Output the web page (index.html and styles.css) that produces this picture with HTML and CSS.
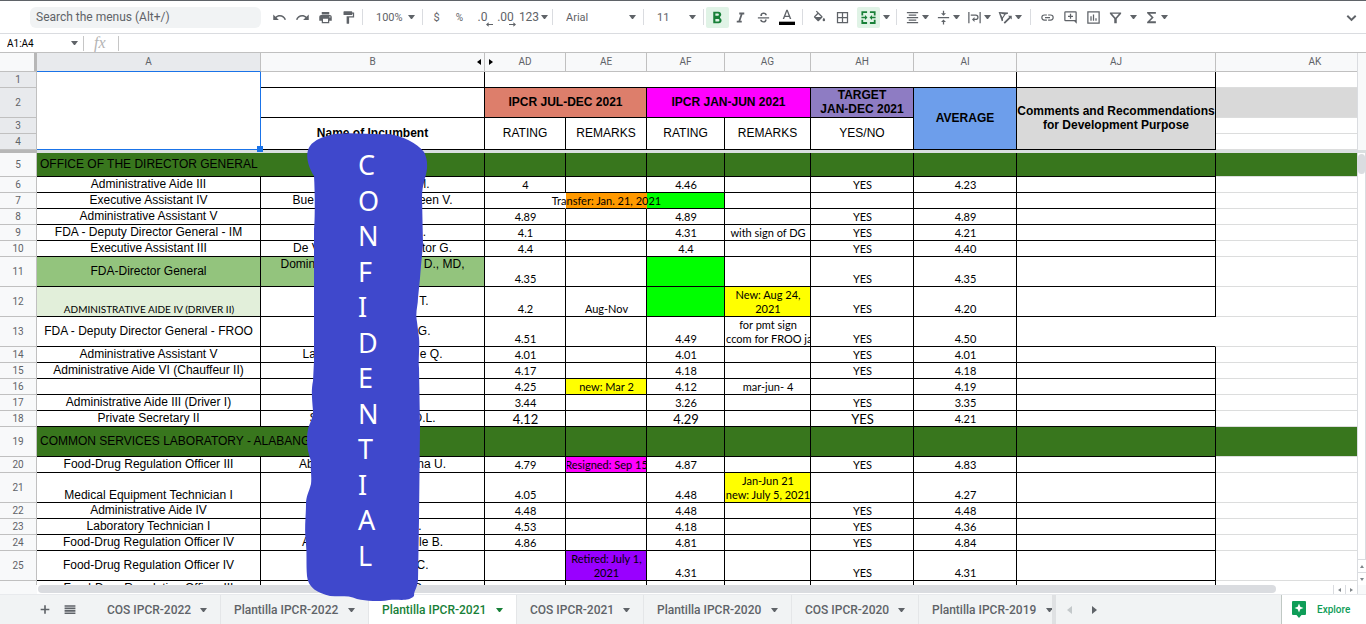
FILE: index.html
```html
<!DOCTYPE html>
<html lang="en">
<head>
<meta charset="utf-8">
<title>Plantilla IPCR-2021</title>
<link rel="stylesheet" href="styles.css">
</head>
<body>
<header class="toolbar">
  <input class="search" type="text" placeholder="Search the menus (Alt+/)" aria-label="Search the menus">
  <div class="tools">
    <button class="tool" aria-label="Undo"><svg viewBox="0 0 24 24"><path d="M12.5 8c-2.65 0-5.05.99-6.9 2.6L2 7v9h9l-3.620-3.620c1.390-1.160 3.160-1.880 5.120-1.880 3.540 0 6.550 2.310 7.600 5.500l2.370-.78C21.080 11.030 17.150 8 12.500 8z"/></svg></button>
    <button class="tool" aria-label="Redo"><svg viewBox="0 0 24 24"><path d="M18.400 10.600C16.550 8.990 14.150 8 11.500 8c-4.650 0-8.580 3.030-9.960 7.220L3.900 16c1.050-3.190 4.050-5.500 7.600-5.500 1.950 0 3.730.72 5.120 1.880L13 16h9V7l-3.600 3.600z"/></svg></button>
    <button class="tool" aria-label="Print"><svg viewBox="0 0 24 24"><path d="M19 8H5c-1.660 0-3 1.340-3 3v6h4v4h12v-4h4v-6c0-1.660-1.340-3-3-3zm-3 11H8v-5h8v5zm3-7a1 1 0 1 1 0-2 1 1 0 0 1 0 2zM18 3H6v4h12V3z"/></svg></button>
    <button class="tool" aria-label="Paint format"><svg viewBox="0 0 24 24"><path d="M18 4V3a1 1 0 0 0-1-1H5a1 1 0 0 0-1 1v4a1 1 0 0 0 1 1h12a1 1 0 0 0 1-1V6h1v4H9v11a1 1 0 0 0 1 1h2a1 1 0 0 0 1-1v-9h8V4h-3z"/></svg></button>
    <span class="sep"></span>
    <label class="pick zoom"><select aria-label="Zoom"><option>100%</option></select><i class="caret"></i></label>
    <span class="sep"></span>
    <button class="tool">$</button>
    <button class="tool small">%</button>
    <button class="tool decimal" aria-label="Decrease decimal places">.0<svg viewBox="0 0 8 5"><path d="M3 0v2h5v1H3v2L0 2.500z"/></svg></button>
    <button class="tool decimal" aria-label="Increase decimal places">.00<svg viewBox="0 0 8 5"><path d="M5 0v2H0v1h5v2l3-2.500z"/></svg></button>
    <button class="tool formats">123<i class="caret"></i></button>
    <span class="sep"></span>
    <label class="pick font"><select aria-label="Font"><option>Arial</option></select><i class="caret"></i></label>
    <span class="sep"></span>
    <label class="pick size"><select aria-label="Font size"><option>11</option></select><i class="caret"></i></label>
    <span class="sep"></span>
    <button class="tool on" aria-label="Bold"><svg viewBox="0 0 24 24"><path d="M15.600 10.790c.97-.67 1.650-1.770 1.650-2.790 0-2.260-1.750-4-4-4H6v16h8.040c2.090 0 3.710-1.700 3.710-3.790 0-1.520-.86-2.820-2.150-3.420zM9 6.500h3.500a1.500 1.500 0 0 1 0 3H9v-3zm4 11H9v-3.500h4a1.750 1.750 0 0 1 0 3.500z"/></svg></button>
    <button class="tool" aria-label="Italic"><svg viewBox="0 0 24 24"><path d="M10 4v3h2.210l-3.420 10H6v3h8v-3h-2.210l3.420-10H18V4z"/></svg></button>
    <button class="tool" aria-label="Strikethrough"><svg viewBox="0 0 24 24"><path d="M3 11.500h18v2H3zM7 9.500C6.500 6 9 4 12.200 4c3 0 5 1.600 5.200 4.200h-2.600c-.2-1.300-1.100-2-2.600-2-2 0-3.100 1.300-2.400 3.300zM16.900 15c.5 3.200-1.700 5-4.900 5s-5.300-1.700-5.400-4.500h2.600c.2 1.500 1.300 2.300 2.900 2.300 1.800 0 2.800-.9 2.300-2.800z"/></svg></button>
    <button class="tool color" aria-label="Text color"><svg viewBox="0 0 24 24"><path d="M11 1L5.500 15h2.250l1.120-3h6.250l1.120 3h2.250L13 1h-2zM9.620 10L12 3.670 14.380 10z"/><path class="ink" d="M0 19h24v5H0z"/></svg></button>
    <span class="sep wide"></span>
    <button class="tool" aria-label="Fill color"><svg viewBox="0 0 24 24"><path d="M16.560 9.940L7.620 1 6.210 2.410l2.380 2.380-5.150 5.150c-.59.59-.59 1.540 0 2.120l5.500 5.500c.29.29.68.44 1.060.44s.77-.15 1.060-.44l5.500-5.500c.59-.58.59-1.530 0-2.120zM5.210 11L10 6.210 14.790 11zM19 12.500s-2 2.170-2 3.500a2 2 0 0 0 4 0c0-1.330-2-3.500-2-3.500z"/></svg></button>
    <button class="tool" aria-label="Borders"><svg viewBox="0 0 24 24"><path d="M3 3v18h18V3H3zm8 16H5v-6h6v6zm0-8H5V5h6v6zm8 8h-6v-6h6v6zm0-8h-6V5h6v6z"/></svg></button>
    <button class="tool on merge" aria-label="Merge cells"><svg viewBox="0 0 24 24"><path d="M2 3h8v2.500H4.500V9H2zM14 3h8v6h-2.500V5.500H14zM2 15h2.500v3.500H10V21H2zM19.500 15H22v6h-8v-2.500h5.500zM2 11h5V8.500l3.500 3.500L7 15.500V13H2zM22 11h-5V8.500L13.500 12l3.500 3.500V13h5z"/></svg></button>
    <button class="tool narrow" aria-label="Merge options"><i class="caret"></i></button>
    <span class="sep wide"></span>
    <button class="tool menu" aria-label="Horizontal align"><svg viewBox="0 0 24 24"><path d="M3 3h18v2H3zM6 7h12v2H6zM3 11h18v2H3zM6 15h12v2H6zM3 19h18v2H3z"/></svg><i class="caret"></i></button>
    <button class="tool menu" aria-label="Vertical align"><svg viewBox="0 0 24 24"><path d="M8 19h3v4h2v-4h3l-4-4-4 4zM16 5h-3V1h-2v4H8l4 4 4-4zM3 11v2h18v-2z"/></svg><i class="caret"></i></button>
    <button class="tool menu" aria-label="Text wrapping"><svg viewBox="0 0 24 24"><path d="M2 3h2v18H2zM20 3h2v18h-2zM6 7h8a4.500 4.500 0 0 1 0 9h-2v3l-4-4 4-4v3h2a2.500 2.500 0 0 0 0-5H6z"/></svg><i class="caret"></i></button>
    <button class="tool menu" aria-label="Text rotation"><svg viewBox="0 0 24 24"><path fill-rule="evenodd" d="M1 3l15 1v2l-4 1-4 6v4l-2 1zM4 5.500l3 6L10 7zM9 20l9-9-2-2h6v6l-2-2-9 9z"/></svg><i class="caret"></i></button>
    <span class="sep wide"></span>
    <button class="tool" aria-label="Insert link"><svg viewBox="0 0 24 24"><path d="M3.900 12A3.100 3.100 0 0 1 7 8.900h4V7H7a5 5 0 0 0 0 10h4v-1.900H7A3.100 3.100 0 0 1 3.900 12zM8 13h8v-2H8zM17 7h-4v1.900h4a3.100 3.100 0 0 1 0 6.200h-4V17h4a5 5 0 0 0 0-10z"/></svg></button>
    <button class="tool" aria-label="Insert comment"><svg viewBox="0 0 24 24"><path fill-rule="evenodd" d="M22 4a2 2 0 0 0-2-2H4a2 2 0 0 0-2 2v12a2 2 0 0 0 2 2h14l4 4zM4 4h16v12H4zM11 6h2v3h3v2h-3v3h-2v-3H8V9h3z"/></svg></button>
    <button class="tool" aria-label="Insert chart"><svg viewBox="0 0 24 24"><path fill-rule="evenodd" d="M2 2v20h20V2zm18 18H4V4h16zM7 10h2v7H7zM11 7h2v10h-2zM15 13h2v4h-2z"/></svg></button>
    <button class="tool menu filter" aria-label="Filter"><svg viewBox="0 0 24 24"><path fill-rule="evenodd" d="M3 4h18v2l-7 8v7h-4v-7L3 6zM6.500 6l5.500 6.500L17.500 6z"/></svg><i class="caret"></i></button>
    <button class="tool menu" aria-label="Functions"><svg viewBox="0 0 24 24"><path d="M19 3H5v2l7 7-7 7v2h14v-3h-9.500l6-6-6-6H19z"/></svg><i class="caret"></i></button>
  </div>
  <button class="tool collapse" aria-label="Hide the menus"><svg viewBox="0 0 24 24"><path d="M5.500 7.500L12 14l6.500-6.500L21 10l-9 9-9-9z"/></svg></button>
</header>

<div class="formula">
  <input class="range" type="text" value="A1:A4" aria-label="Name box">
  <i class="caret"></i>
  <span class="rule"></span>
  <span class="fx">fx</span>
  <span class="rule"></span>
  <input class="entry" type="text" aria-label="Formula">
</div>

<main class="grid">
  <div class="pane">
    <table class="sheet">
      <colgroup><col class="c-num"><col class="c-wide"><col class="c-wide"><col class="c-ad"><col class="c-ad"><col class="c-af"><col class="c-ag"><col class="c-ah"><col class="c-ah"><col class="c-aj"><col class="c-aj"></colgroup>
      <thead>
        <tr class="letters"><th class="corner"></th><th class="sel">A</th><th class="b-col">B<span class="hidden-cols"><i></i><i></i></span></th><th>AD</th><th>AE</th><th>AF</th><th>AG</th><th>AH</th><th>AI</th><th>AJ</th><th>AK</th></tr>
        <tr class="h16"><th class="sel">1</th><td class="picked" rowspan="4"><span class="handle"></span></td><td></td><td colspan="6"></td><td></td><td class="free"></td></tr>
        <tr class="h30 head"><th class="sel">2</th><td></td><td class="coral" colspan="2">IPCR JUL-DEC 2021</td><td class="magenta" colspan="2">IPCR JAN-JUN 2021</td><td class="violet">TARGET<br>JAN-DEC 2021</td><td class="blue" rowspan="3">AVERAGE</td><td class="grey" rowspan="3">Comments and Recommendations for Development Purpose</td><td class="free grey"></td></tr>
        <tr class="h16"><th class="sel">3</th><td class="strong" rowspan="2">Name of Incumbent</td><td rowspan="2">RATING</td><td rowspan="2">REMARKS</td><td rowspan="2">RATING</td><td rowspan="2">REMARKS</td><td rowspan="2">YES/NO</td><td class="free"></td></tr>
        <tr class="h16"><th class="sel">4</th><td class="free"></td></tr>
        <tr class="freeze"><th></th><td colspan="10"></td></tr>
      </thead>
      <tbody>
        <tr class="h24 unit"><th>5</th><td class="title" colspan="2">OFFICE OF THE DIRECTOR GENERAL</td><td></td><td></td><td></td><td></td><td></td><td></td><td></td><td class="free"></td></tr>
        <tr class="h16"><th>6</th><td>Administrative Aide III</td><td><span class="name" style="width:114px"><span></span><span>M.</span></span></td><td class="v">4</td><td></td><td class="v">4.46</td><td></td><td class="v">YES</td><td class="v">4.23</td><td></td><td class="free"></td></tr>
        <tr class="h16"><th>7</th><td>Executive Assistant IV</td><td><span class="name" style="width:160px"><span>Bue</span><span>een V.</span></span></td><td class="open"></td><td class="v orange open"><span class="spill">Transfer: Jan. 21, 2021</span></td><td class="lime"></td><td></td><td></td><td></td><td></td><td class="free"></td></tr>
        <tr class="h16"><th>8</th><td>Administrative Assistant V</td><td></td><td class="v">4.89</td><td></td><td class="v">4.89</td><td></td><td class="v">YES</td><td class="v">4.89</td><td></td><td class="free"></td></tr>
        <tr class="h16"><th>9</th><td>FDA - Deputy Director General - IM</td><td><span class="name" style="width:107px"><span></span><span>.</span></span></td><td class="v">4.1</td><td></td><td class="v">4.31</td><td class="v">with sign of DG</td><td class="v">YES</td><td class="v">4.21</td><td></td><td class="free"></td></tr>
        <tr class="h16"><th>10</th><td>Executive Assistant III</td><td><span class="name" style="width:159px"><span>De V</span><span>tor G.</span></span></td><td class="v">4.4</td><td></td><td class="v">4.4</td><td></td><td class="v">YES</td><td class="v">4.40</td><td></td><td class="free"></td></tr>
        <tr class="h30"><th>11</th><td class="green">FDA-Director General</td><td class="green top"><span class="name" style="width:184px"><span>Domin</span><span>D., MD,</span></span></td><td class="v">4.35</td><td></td><td class="lime"></td><td></td><td class="v">YES</td><td class="v">4.35</td><td></td><td class="free"></td></tr>
        <tr class="h30"><th>12</th><td class="v pale compact">ADMINISTRATIVE AIDE IV (DRIVER II)</td><td><span class="name" style="width:112px"><span></span><span>T.</span></span></td><td class="v">4.2</td><td class="v">Aug-Nov</td><td class="lime"></td><td class="v yellow">New: Aug 24,<br>2021</td><td class="v">YES</td><td class="v">4.20</td><td></td><td class="free"></td></tr>
        <tr class="h30"><th>13</th><td>FDA - Deputy Director General - FROO</td><td><span class="name" style="width:116px"><span></span><span>G.</span></span></td><td class="v">4.51</td><td></td><td class="v">4.49</td><td class="v">for pmt sign<span class="cut start">ccom for FROO jan</span></td><td class="v">YES</td><td class="v">4.50</td><td class="open"></td><td class="free"></td></tr>
        <tr class="h16"><th>14</th><td>Administrative Assistant V</td><td><span class="name" style="width:140px"><span>La</span><span>e Q.</span></span></td><td class="v">4.01</td><td></td><td class="v">4.01</td><td></td><td class="v">YES</td><td class="v">4.01</td><td></td><td class="free"></td></tr>
        <tr class="h16"><th>15</th><td>Administrative Aide VI (Chauffeur II)</td><td></td><td class="v">4.17</td><td></td><td class="v">4.18</td><td></td><td class="v">YES</td><td class="v">4.18</td><td></td><td class="free"></td></tr>
        <tr class="h16"><th>16</th><td></td><td></td><td class="v">4.25</td><td class="v yellow">new: Mar 2</td><td class="v">4.12</td><td class="v">mar-jun- 4</td><td></td><td class="v">4.19</td><td></td><td class="free"></td></tr>
        <tr class="h16"><th>17</th><td>Administrative Aide III (Driver I)</td><td></td><td class="v">3.44</td><td></td><td class="v">3.26</td><td></td><td class="v">YES</td><td class="v">3.35</td><td></td><td class="free"></td></tr>
        <tr class="h16"><th>18</th><td>Private Secretary II</td><td><span class="name" style="width:126px"><span>S</span><span>D.L.</span></span></td><td class="v big">4.12</td><td></td><td class="v big">4.29</td><td></td><td class="v big">YES</td><td class="v">4.21</td><td></td><td class="free"></td></tr>
        <tr class="h30 unit"><th>19</th><td class="title" colspan="2">COMMON SERVICES LABORATORY - ALABANG</td><td></td><td></td><td></td><td></td><td></td><td></td><td></td><td class="free"></td></tr>
        <tr class="h16"><th>20</th><td>Food-Drug Regulation Officer III</td><td><span class="name" style="width:147px"><span>Ab</span><span>na U.</span></span></td><td class="v">4.79</td><td class="v magenta"><span class="cut">Resigned: Sep 15</span></td><td class="v">4.87</td><td></td><td class="v">YES</td><td class="v">4.83</td><td></td><td class="free"></td></tr>
        <tr class="h30"><th>21</th><td class="low">Medical Equipment Technician I</td><td></td><td class="v">4.05</td><td></td><td class="v">4.48</td><td class="v yellow">Jan-Jun 21<span class="cut">new: July 5, 2021</span></td><td></td><td class="v">4.27</td><td></td><td class="free"></td></tr>
        <tr class="h16"><th>22</th><td>Administrative Aide IV</td><td></td><td class="v">4.48</td><td></td><td class="v">4.48</td><td></td><td class="v">YES</td><td class="v">4.48</td><td></td><td class="free"></td></tr>
        <tr class="h16"><th>23</th><td>Laboratory Technician I</td><td><span class="name" style="width:98px"><span></span><span>.</span></span></td><td class="v">4.53</td><td></td><td class="v">4.18</td><td></td><td class="v">YES</td><td class="v">4.36</td><td></td><td class="free"></td></tr>
        <tr class="h16"><th>24</th><td>Food-Drug Regulation Officer IV</td><td><span class="name" style="width:141px"><span>A</span><span>le B.</span></span></td><td class="v">4.86</td><td></td><td class="v">4.81</td><td></td><td class="v">YES</td><td class="v">4.84</td><td></td><td class="free"></td></tr>
        <tr class="h30"><th>25</th><td>Food-Drug Regulation Officer IV</td><td><span class="name" style="width:112px"><span></span><span>C.</span></span></td><td></td><td class="v purple">Retired: July 1,<br>2021</td><td class="v">4.31</td><td></td><td class="v">YES</td><td class="v">4.31</td><td></td><td class="free"></td></tr>
        <tr class="h16"><th></th><td>Food-Drug Regulation Officer III</td><td><span class="name" style="width:106px"><span></span><span>G.</span></span></td><td></td><td></td><td></td><td></td><td></td><td></td><td></td><td class="free"></td></tr>
      </tbody>
    </table>
  </div>
  <div class="vscroll">
    <div class="vhead"></div>
    <div class="vtrack"><div class="vthumb"></div></div>
    <button class="step" aria-label="Scroll up"><i class="tri up"></i></button>
    <button class="step" aria-label="Scroll down"><i class="tri down"></i></button>
  </div>
</main>

<div class="hscroll">
  <div class="htrack"><div class="hthumb"></div></div>
  <button class="step" aria-label="Scroll left"><i class="tri left"></i></button>
  <button class="step" aria-label="Scroll right"><i class="tri right"></i></button>
  <span class="end"></span>
</div>

<footer class="tabs">
  <div class="tab-tools">
    <button aria-label="Add sheet"><svg viewBox="0 0 24 24"><path d="M4 10.500h6.500V4h3v6.500H20v3h-6.500V20h-3v-6.500H4z"/></svg></button>
    <button aria-label="All sheets"><svg viewBox="0 0 24 24"><path d="M2 4h20v3H2zM2 8.500h20v3H2zM2 13h20v3H2zM2 17.500h20v3H2z"/></svg></button>
  </div>
  <nav class="tab-list">
    <button class="tab short">COS IPCR-2022<i class="caret"></i></button>
    <button class="tab">Plantilla IPCR-2022<i class="caret"></i></button>
    <button class="tab active">Plantilla IPCR-2021<i class="caret"></i></button>
    <button class="tab short">COS IPCR-2021<i class="caret"></i></button>
    <button class="tab">Plantilla IPCR-2020<i class="caret"></i></button>
    <button class="tab short">COS IPCR-2020<i class="caret"></i></button>
    <button class="tab">Plantilla IPCR-2019<i class="caret"></i></button>
  </nav>
  <div class="tab-nav">
    <button aria-label="Previous sheets" disabled><i class="tri left large"></i></button>
    <button aria-label="Next sheets"><i class="tri right large"></i></button>
  </div>
  <button class="explore"><svg viewBox="0 0 14 17"><path d="M1 0h12a1 1 0 0 1 1 1v12a1 1 0 0 1-1 1H9.500L7 17l-2.500-3H1a1 1 0 0 1-1-1V1a1 1 0 0 1 1-1z"/><path class="star" d="M7 2.500l1.300 3.200L11.500 7 8.300 8.300 7 11.500 5.700 8.300 2.500 7l3.200-1.300z"/></svg>Explore</button>
</footer>

<div class="redaction">
  <svg class="blob" viewBox="0 0 124 468" aria-hidden="true"><path d="M30 1C48-1 66 2 84 1c14 2 28 9 35 18 4 8 4 16 1 26-2 6-3 13-3 19l1 48c-1 10-2 20-3 33l-2 20c0 8-3 14-1 24l2 16c1 10-1 20 0 30l1 60-1 92-1 60c-1 9-4 10-4 16-6 6-14 3-25 4-10 2-22 1-32-1-8-4-17-2-27-3C13 460 3 455 2 443c-1-12 0-22-1-32-2-14 0-28 0-40 0-8 3-12 5-20 1-9-1-16 0-23-4-10-5-22-3-32 2-7 5-10 5-18-1-14-2-20 0-30l1-20V96c1-8 1-36 0-53C2 32 0 20 5 13 9 7 19 3 30 1z"/></svg>
  <div class="word"><span>C</span><span>O</span><span>N</span><span>F</span><span>I</span><span>D</span><span>E</span><span>N</span><span>T</span><span>I</span><span>A</span><span>L</span></div>
</div>
</body>
</html>
```
FILE: styles.css
```css
* { box-sizing: border-box; }
html, body { height: 100%; }
body {
  margin: 0;
  display: flex;
  flex-direction: column;
  position: relative;
  overflow: hidden;
  background: #fff;
  color: #000;
  font: 12px "Liberation Sans", Arial, sans-serif;
}
button, select, input {
  margin: 0;
  padding: 0;
  border: 0;
  outline: 0;
  background: none;
  color: inherit;
  font: inherit;
}
svg { fill: currentColor; display: block; }
.caret {
  flex: none;
  width: 7px;
  border: solid transparent;
  border-width: 4px 3px 0;
  border-top-color: #5f6368;
}

/* Toolbar */
.toolbar {
  flex: none;
  display: flex;
  align-items: center;
  height: 34px;
  padding-left: 30px;
  border-top: 1px solid #5f6368;
  border-bottom: 1px solid #dadce0;
  color: #5f6368;
  font: 11px Roboto, sans-serif;
}
.search {
  flex: none;
  width: 231px;
  height: 21px;
  padding: 0 6px;
  border-radius: 6px;
  background: #f1f3f4;
  font-size: 12px;
}
.search::placeholder { color: #5f6368; opacity: 1; }
.tools { display: flex; align-items: center; padding-left: 7px; }
.tool {
  flex: none;
  display: flex;
  align-items: center;
  justify-content: center;
  width: 23px;
  height: 21px;
  border-radius: 2px;
}
.tool svg { width: 15px; height: 15px; }
.tool.small { font-size: 10px; }
.tool.on { background: #e0f3e6; color: #188038; }
.tool.on svg { width: 17px; height: 17px; }
.tool.color svg { width: 16px; height: 16px; }
.tool .ink { fill: #000; }
.tool.merge { margin-left: 3px; }
.tool.narrow { width: 12px; }
.tool.decimal { position: relative; font-size: 12px; }
.tool.decimal svg { position: absolute; right: 1px; bottom: 1px; width: 7px; height: 5px; }
.tool.formats { width: 33px; gap: 2px; font-size: 12px; }
.tool.menu { width: 31px; justify-content: flex-start; padding-left: 3px; gap: 2px; }
.tool.filter { width: 36px; gap: 7px; }
.tool.collapse { width: 30px; margin-left: auto; }
.tool.collapse svg { width: 13px; height: 13px; }
.sep { flex: none; width: 1px; height: 16px; margin: 0 2px; background: #dadce0; }
.sep.wide { margin: 0 5px 0 4px; }
.pick { flex: none; display: flex; align-items: center; padding: 0 5px 0 11px; }
.pick select { flex: 1; min-width: 0; appearance: none; }
.zoom { width: 55px; }
.font { width: 86px; }
.size { width: 55px; }

/* Formula bar */
.formula {
  flex: none;
  display: flex;
  align-items: center;
  height: 19px;
  border-bottom: 1px solid #c0c0c0;
  font: 10px Roboto, sans-serif;
}
.range { width: 71px; padding-left: 7px; }
.rule { width: 1px; height: 15px; margin-left: 5px; background: #c6c6c6; }
.fx { width: 29px; padding-left: 10px; color: #b4b4b4; font: italic 16px/16px "Liberation Serif", serif; }
.entry { flex: 1; padding: 0 6px; }

/* Sheet */
.grid { flex: 1; min-height: 0; display: flex; }
.pane { flex: 1; min-width: 0; overflow: hidden; }
.sheet { width: 1415px; table-layout: fixed; border-spacing: 0; line-height: 14px; }
.c-num { width: 37px; }
.c-wide { width: 224px; }
.c-ad { width: 81px; }
.c-af { width: 78px; }
.c-ag { width: 86px; }
.c-ah { width: 103px; }
.c-aj { width: 199px; }
.sheet th {
  padding: 0;
  border: solid #c0c0c0;
  border-width: 0 1px 1px 0;
  background: #f8f9fa;
  color: #5f6368;
  font: 10px/14px Roboto, sans-serif;
}
.sheet th.sel { background: #e8eaed; }
.sheet .letters { height: 19px; }
.sheet .corner { border-right: 3px solid #b7b7b7; }
.sheet .letters .sel { border-bottom-color: #1a73e8; }
.b-col { position: relative; }
.hidden-cols { position: absolute; right: -9px; top: 6px; display: flex; gap: 8px; z-index: 1; }
.hidden-cols i { border: solid transparent; border-width: 3px 4px 3px 0; border-right-color: #000; }
.hidden-cols i + i { border-width: 3px 0 3px 4px; border-left-color: #000; }
.sheet td {
  padding: 0 0 1px;
  border: solid #000;
  border-width: 0 1px 1px 0;
  text-align: center;
  vertical-align: middle;
}
.h16 { height: 16px; }
.h24 { height: 24px; }
.h30 { height: 30px; }
.sheet td.picked { position: relative; border-color: #1a73e8; }
.handle { position: absolute; right: -3px; bottom: -3px; width: 6px; height: 6px; background: #1a73e8; z-index: 1; }
.sheet .head td, .sheet td.strong { font-weight: bold; }
.sheet td.free { border-right: 0; border-bottom-color: #dcdddd; }
.sheet .freeze { height: 3px; }
.sheet .freeze th { border: 0; background: #b7b7b7; }
.sheet .freeze td { padding: 0; border: 0; background: #dadfe0; }
.unit td { background: #38761d; }
.sheet td.title { padding-left: 3px; text-align: left; }
.sheet td.v { padding: 0 0 0 1px; vertical-align: bottom; font-family: Lato, sans-serif; font-size: 11px; }
.sheet td.big { font-size: 13px; }
.sheet td.compact { font-size: 10px; }
.sheet td.low { padding: 0; vertical-align: bottom; }
.sheet td.top { vertical-align: top; }
.sheet td.open { border-right-color: transparent; }
.coral { background: #dd7e6b; }
.magenta { background: #f0f; }
.violet { background: #8e7cc3; }
.blue { background: #6d9eeb; }
.grey { background: #d9d9d9; }
.orange { background: #f90; }
.lime { background: #0f0; }
.yellow { background: #ff0; }
.purple { background: #90f; }
.green { background: #93c47d; }
.pale { background: #e2efda; }
.name { display: flex; justify-content: space-between; margin: 0 auto; white-space: nowrap; }
.spill, .cut { display: flex; justify-content: center; white-space: nowrap; }
.cut { overflow: hidden; }
.cut.start { justify-content: flex-start; }

/* Scrollbars */
.tri { display: block; border: 2px solid transparent; }
.tri.up { border-width: 0 2px 3px; border-bottom-color: #80868b; }
.tri.down { border-width: 3px 2px 0; border-top-color: #80868b; }
.tri.left { border-width: 2px 3px 2px 0; border-right-color: #80868b; }
.tri.right { border-width: 2px 0 2px 3px; border-left-color: #80868b; }
.tri.large { border-width: 4px 5px 4px 0; }
.tri.right.large { border-width: 4px 0 4px 5px; border-left-color: #5f6368; }
.step { display: flex; align-items: center; justify-content: center; border: 1px solid #dadce0; background: #fff; }
.vscroll { flex: none; display: flex; flex-direction: column; width: 9px; border-left: 1px solid #dadce0; }
.vhead { height: 100px; background: #f8f9fa; border-bottom: 3px solid #dadfe0; }
.vtrack { flex: 1; padding-top: 1px; border-right: 1px solid #dadce0; }
.vthumb { height: 20px; border-radius: 4px; background: #dadce0; }
.vscroll .step { height: 13px; border-width: 1px 0 0; }
.hscroll { flex: none; display: flex; height: 10px; padding-left: 37px; border-bottom: 1px solid #e8eaed; background: #f8f9fa; }
.htrack { flex: 1; padding-left: 1px; background: #fff; }
.hthumb { width: 96%; max-width: 1238px; height: 8px; border-radius: 4px; background: #dadce0; }
.hscroll .step { width: 12px; border-width: 0 0 0 1px; }
.end { width: 9px; border-left: 1px solid #dadce0; }

/* Sheet tabs */
.tabs {
  flex: none;
  display: flex;
  height: 29px;
  background: #f1f3f4;
  color: #5f6368;
  font: 500 12px Roboto, sans-serif;
}
.tab-tools { flex: none; display: flex; align-items: center; gap: 11px; width: 94px; padding-left: 38px; }
.tab-tools svg { width: 14px; height: 13px; }
.tab-list { flex: 0 1 962px; min-width: 0; display: flex; overflow: hidden; border-right: 4px solid #dfe1e3; }
.tab {
  flex: none;
  display: flex;
  align-items: center;
  justify-content: space-between;
  width: 148px;
  padding: 0 13px;
  border-right: 1px solid #e4e6e8;
  white-space: nowrap;
}
.tab.short { width: 127px; }
.tab.active { background: #fff; color: #188038; }
.tab.active .caret { border-top-color: #188038; }
.tab-nav { display: flex; align-items: center; gap: 20px; padding-left: 11px; }
.tab-nav button:disabled { opacity: .4; }
.explore {
  flex: none;
  display: flex;
  align-items: center;
  gap: 11px;
  width: 85px;
  margin-left: auto;
  padding-left: 10px;
  border-left: 1px solid #c0c8c4;
  background: #fff;
  color: #0f9d58;
  font-size: 10px;
}
.explore svg { width: 14px; height: 17px; }
.explore .star { fill: #fff; }

/* Cover over the names column */
.redaction { position: absolute; left: 305px; top: 133px; width: 124px; height: 468px; color: #fff; }
.blob { width: 124px; height: 468px; fill: #3f48cc; }
.word {
  position: absolute;
  left: 53px;
  top: 14px;
  display: flex;
  flex-direction: column;
  justify-content: space-between;
  height: 426px;
  font: 27px/35px "Noto Sans", "Open Sans", sans-serif;
}
```
